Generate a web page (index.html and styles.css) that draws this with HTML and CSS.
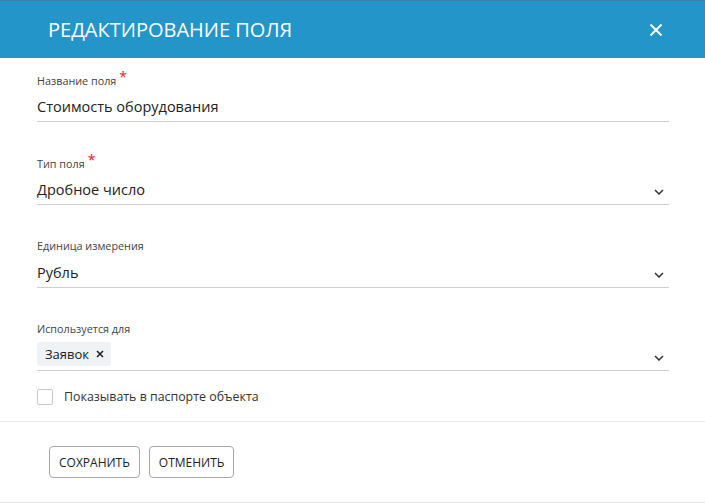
FILE: index.html
```html
<!DOCTYPE html>
<html lang="ru">
<head>
<meta charset="utf-8">
<link rel="stylesheet" href="styles.css">
</head>
<body>
<div class="dialog">
  <header class="head">
    <h1 class="title">РЕДАКТИРОВАНИЕ ПОЛЯ</h1>
    <svg class="close" width="14" height="14" viewBox="0 0 14 14"><path d="M1.5 1.5L12.5 12.5M12.5 1.5L1.5 12.5" stroke="#fff" stroke-width="2" fill="none"/></svg>
  </header>
  <div class="body">
    <div class="field">
      <div class="label">Название поля<span class="req">*</span></div>
      <div class="control"><span class="value">Стоимость оборудования</span></div>
    </div>
    <div class="field">
      <div class="label">Тип поля<span class="req">*</span></div>
      <div class="control"><span class="value">Дробное число</span><svg class="chev" width="10" height="6" viewBox="0 0 10 6"><path d="M1 1l4 4 4-4" stroke="#333" stroke-width="1.5" fill="none"/></svg></div>
    </div>
    <div class="field">
      <div class="label">Единица измерения</div>
      <div class="control"><span class="value">Рубль</span><svg class="chev" width="10" height="6" viewBox="0 0 10 6"><path d="M1 1l4 4 4-4" stroke="#333" stroke-width="1.5" fill="none"/></svg></div>
    </div>
    <div class="field field-last">
      <div class="label">Используется для</div>
      <div class="control control-chips"><span class="chip">Заявок<svg class="chip-x" width="8" height="8" viewBox="0 0 8 8"><path d="M1 1l6 6M7 1L1 7" stroke="#222" stroke-width="1.6" fill="none"/></svg></span><svg class="chev" width="10" height="6" viewBox="0 0 10 6"><path d="M1 1l4 4 4-4" stroke="#333" stroke-width="1.5" fill="none"/></svg></div>
    </div>
    <label class="check"><span class="box"></span><span>Показывать в паспорте объекта</span></label>
  </div>
  <footer class="foot">
    <button class="btn">СОХРАНИТЬ</button>
    <button class="btn">ОТМЕНИТЬ</button>
  </footer>
</div>
</body>
</html>
```
FILE: styles.css
```css
* { box-sizing: border-box; }
html, body { margin: 0; padding: 0; background: #fff; }
body { font-family: "Open Sans", "Liberation Sans", sans-serif; color: #222; }
.dialog { width: 705px; height: 503px; display: flex; flex-direction: column; border-bottom: 1px solid #e4e4e4; }
.head { height: 58px; background: #2395c8; border-top: 1px solid #3d7f9f; display: flex; align-items: center; justify-content: space-between; padding: 0 42px 0 48px; }
.title { margin: 0; font-size: 20px; font-weight: 400; color: #fff; letter-spacing: 0; }
.close { display: block; }
.body { padding: 15px 36px 0 37px; border-bottom: 1px solid #e8e8e8; height: 364px; }
.field { margin-bottom: 34px; }
.field-last { margin-bottom: 17px; }
.label { font-size: 10.8px; color: #444; height: 14px; line-height: 14px; }
.req { color: #e0202a; font-size: 14px; margin-left: 3px; position: relative; top: -3px; }
.control { height: 35px; border-bottom: 1px solid #cfcfcf; display: flex; align-items: flex-end; justify-content: space-between; padding: 0 5px 4px 0; }
.value { font-size: 14.5px; line-height: 20px; color: #222; }
.chev { display: block; margin-bottom: 5px; }
.control-chips { height: 35px; padding-bottom: 4px; }
.chip { background: #f0f3f5; border-radius: 2px; font-size: 13px; padding: 0 7px 0 8px; height: 24px; display: inline-flex; align-items: center; gap: 7px; color: #222; }
.chip-x { display: block; }
.check { display: flex; align-items: center; gap: 11px; font-size: 12.4px; color: #333; }
.box { width: 16px; height: 16px; border: 1px solid #c8c8c8; border-radius: 2px; background: #fff; }
.foot { padding: 24px 0 0 49px; display: flex; gap: 9px; flex: 1; }
.btn { height: 32px; padding: 0 9px; border: 1px solid #a8a8a8; border-radius: 4px; background: #fff; font-family: "Open Sans", "Liberation Sans", sans-serif; font-size: 12px; color: #222; }
```
